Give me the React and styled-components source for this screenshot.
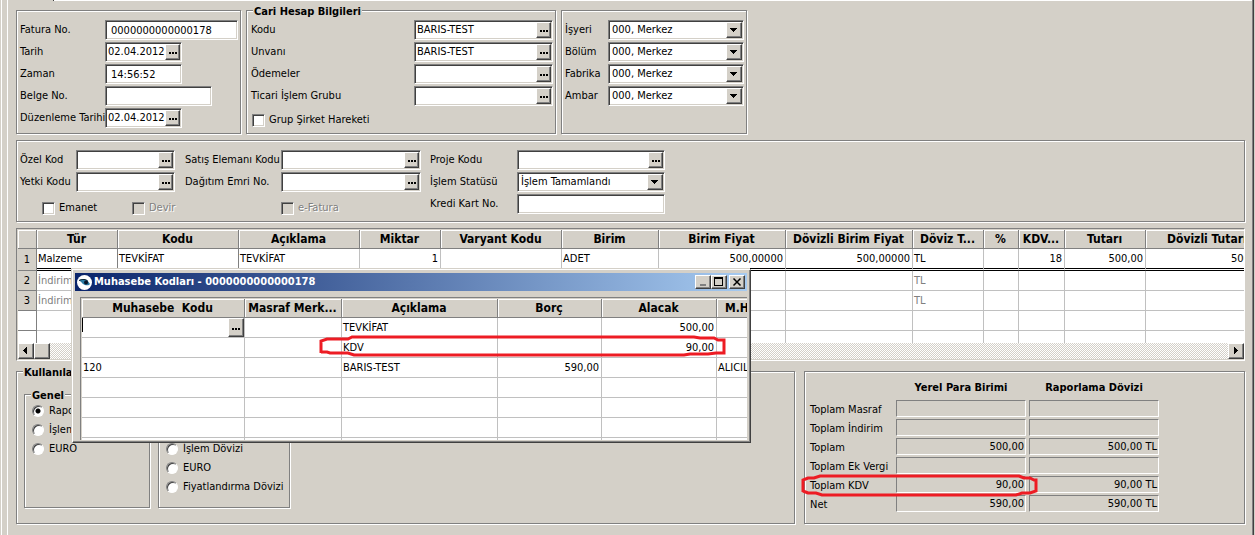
import styled, { createGlobalStyle, css } from "styled-components";

const face = "#d4d0c8";
const shadow = "#808080";
const dark = "#404040";
const line = "#c0c0c0";

const GlobalStyle = createGlobalStyle`
  *{
    box-sizing:border-box;
  }
  body{
    margin:0;
    background:${face};
  }
  body, input, select, button{
    font-family:"DejaVu Sans Condensed", "DejaVu Sans", sans-serif;
    font-size:11px;
    line-height:14px;
    color:#000;
  }
`;

/* frame */
const Shell = styled.div`
  min-height:100vh;
  margin:0 1px;
  padding-left:5px;
  border-left:1px solid #fff;
  border-right:1px solid ${dark};
  display:flex;
  overflow:hidden;
`;
const Page = styled.main`
  flex:1;
  min-width:0;
  border-left:1px solid #fff;
  border-right:1px solid ${shadow};
`;
const TabEdge = styled.div`
  height:1px;
  margin-left:45px;
  border-left:1px solid ${dark};
  background:#fff;
`;
const Body = styled.div`
  position:relative;
  display:flex;
  flex-direction:column;
  padding:9px 7px 0 8px;
`;
const GroupRow = styled.div`
  display:flex;
  gap:${({ $gap }) => $gap || 5}px;
  margin-bottom:6px;
`;
const Columns = styled.div`
  display:flex;
  gap:${({ $gap }) => $gap}px;
`;

const Group = styled.fieldset`
  position:relative;
  min-width:0;
  margin:0;
  padding:${({ $pad }) => $pad || "9px 3px 5px"};
  border:1px solid ${shadow};
  box-shadow:1px 1px 0 #fff, inset 1px 1px 0 #fff;
  ${({ $width }) => ($width ? `width:${$width}px;` : "flex:1;")}
`;
const Legend = styled.legend`
  position:absolute;
  top:-6px;
  left:6px;
  padding:0 1px;
  background:${face};
  font-weight:bold;
  white-space:nowrap;
`;
const Form = styled.div`
  display:grid;
  grid-template-columns:${({ $cols }) => $cols};
  grid-auto-rows:20px;
  row-gap:2px;
  align-items:center;
`;
const Label = styled.label`
  white-space:nowrap;
`;

/* controls */
const sunken = css`
  border:1px solid;
  border-color:${shadow} #fff #fff ${shadow};
  box-shadow:inset 1px 1px 0 ${dark}, inset -1px -1px 0 ${face};
`;
const raised = css`
  border:1px solid;
  border-color:#fff ${dark} ${dark} #fff;
  box-shadow:inset -1px -1px 0 ${shadow};
  background:${face};
`;
const TextInput = styled.input`
  ${sunken}
  width:${({ $width }) => $width}px;
  height:20px;
  padding:0 5px;
  background:#fff;
  outline:none;
`;
const FieldBox = styled.div`
  ${sunken}
  display:flex;
  width:${({ $width }) => $width}px;
  height:20px;
  padding:1px 1px 1px 2px;
  background:#fff;
  input, select{
    flex:1;
    min-width:0;
    width:0;
    padding:0;
    border:0;
    background:none;
    outline:none;
    appearance:none;
  }
  select{
    padding-left:1px;
  }
`;
const SmallButton = styled.button`
  ${raised}
  flex:none;
  display:flex;
  justify-content:center;
  align-items:center;
  width:${({ $width }) => $width || 15}px;
  height:16px;
  padding:0;
`;
const ArrowBox = styled.span`
  ${raised}
  flex:none;
  display:flex;
  justify-content:center;
  align-items:center;
  width:16px;
  height:16px;
`;
const CheckLabel = styled.label`
  display:flex;
  align-items:center;
  gap:4px;
  width:${({ $width }) => ($width ? `${$width}px` : "auto")};
  white-space:nowrap;
  ${({ $off }) => $off && `color:${shadow}; text-shadow:1px 1px 0 #fff;`}
  input{
    ${sunken}
    appearance:none;
    width:13px;
    height:13px;
    margin:0;
    background:${({ $off }) => ($off ? face : "#fff")};
  }
`;
const CheckRow = styled.div`
  display:flex;
  padding:${({ $pad }) => $pad};
`;
const RadioLabel = styled.label`
  display:flex;
  align-items:center;
  gap:5px;
  height:19px;
  white-space:nowrap;
  input{
    appearance:none;
    width:12px;
    height:12px;
    margin:0;
    flex:none;
    border:1px solid;
    border-color:${shadow} #fff #fff ${shadow};
    border-radius:50%;
    background:#fff;
    box-shadow:inset 1px 1px 0 ${dark};
  }
  input:checked{
    background:radial-gradient(circle, #000 0 2px, #fff 3px);
  }
`;

/* grids */
const GridFrame = styled.div`
  border:1px solid;
  border-color:${shadow} #fff #fff ${shadow};
  padding:1px 0 1px 1px;
  margin-bottom:10px;
`;
const GridClip = styled.div`
  height:${({ $height }) => $height}px;
  overflow:hidden;
  background:#fff;
`;
const Table = styled.table`
  width:100%;
  table-layout:fixed;
  border-collapse:separate;
  border-spacing:0;
`;
const HeadCell = styled.th`
  height:19px;
  padding:0 3px 1px 2px;
  border-right:1px solid ${shadow};
  border-bottom:1px solid ${shadow};
  box-shadow:inset 1px 1px 0 #fff;
  background:${face};
  font-size:12px;
  text-align:${({ $cut }) => ($cut ? "left" : "center")};
  ${({ $cut }) => $cut && `padding-left:${$cut}px; padding-right:0; border-right:0;`}
  overflow:hidden;
  white-space:pre;
`;
const Cell = styled.td`
  height:${({ $first }) => ($first ? 22 : 20)}px;
  padding:0 2px 0 1px;
  border-right:1px solid ${({ $strong }) => ($strong ? shadow : line)};
  border-bottom:${({ $first }) => ($first ? "3px double #000" : `1px solid ${line}`)};
  text-align:${({ $right }) => ($right ? "right" : "left")};
  color:${({ $off }) => ($off ? shadow : "#000")};
  overflow:hidden;
  white-space:nowrap;
  ${({ $cut }) => $cut && `padding-left:${$cut}px; text-align:left; border-right:0;`}
`;
const NumberCell = styled(Cell)`
  border-right-color:${shadow};
  border-bottom:1px solid ${shadow};
  padding:0;
  text-align:center;
  color:#000;
  background:${({ $blank }) => ($blank ? "#fff" : face)};
`;
const EditCell = styled.div`
  display:flex;
  height:19px;
  margin:0 -2px 0 -1px;
  input{
    flex:1;
    min-width:0;
    border:0;
    border-left:1px solid #000;
    height:14px;
    padding:0;
    outline:none;
  }
  button{
    height:19px;
  }
`;
const ScrollBar = styled.div`
  display:flex;
  height:16px;
  background:repeating-conic-gradient(#fff 0 25%, ${face} 0 50%) 0 0 / 2px 2px;
`;
const Thumb = styled.div`
  ${raised}
  width:16px;
  margin-right:auto;
`;

/* totals */
const TotalsTable = styled.table`
  border-spacing:0;
  thead th{
    height:22px;
    padding:0 3px 3px 0;
  }
  tbody td{
    height:19px;
    padding:0 3px 2px 0;
  }
`;
const RowName = styled.th`
  width:86px;
  padding:0;
  font-weight:normal;
  text-align:left;
  white-space:nowrap;
`;
const Total = styled.output`
  display:block;
  width:130px;
  height:17px;
  padding-right:1px;
  border:1px solid;
  border-color:${shadow} #fff #fff ${shadow};
  line-height:16px;
  text-align:right;
`;

/* accounting codes window */
const Window = styled.section`
  position:absolute;
  top:268px;
  left:64px;
  width:679px;
  padding:3px 3px 2px 2px;
  border:1px solid;
  border-color:#fff ${dark} ${dark} #fff;
  box-shadow:inset -1px -1px 0 ${shadow}, -1px -1px 0 ${face};
  background:${face};
`;
const TitleBar = styled.header`
  display:flex;
  align-items:center;
  height:18px;
  padding:0 2px;
  background:linear-gradient(to right, #0a246a, #a6caf0);
  color:#fff;
  h2{
    flex:1;
    margin:0 0 0 2px;
    font-size:11px;
  }
  button{
    height:14px;
  }
  button:last-child{
    margin-left:2px;
  }
`;
const WindowGrid = styled.div`
  margin:6px 0 0 5px;
  border-top:1px solid ${shadow};
  border-left:1px solid ${shadow};
  padding:1px 0 0 1px;
`;
const Ring = styled.svg`
  position:absolute;
  top:${({ $top }) => $top}px;
  left:${({ $left }) => $left}px;
  pointer-events:none;
  fill:none;
  stroke:#ed1c24;
  stroke-width:3;
`;

const Dots = () => (
  <svg width="8" height="8" viewBox="0 0 8 8" aria-hidden="true" shapeRendering="crispEdges">
    <path d="M0 4h2v2H0zM3 4h2v2H3zM6 4h2v2H6z" />
  </svg>
);

const Arrow = ({ d }) => (
  <svg width="8" height="8" viewBox="0 0 8 8" aria-hidden="true" shapeRendering="crispEdges">
    <path d={d} />
  </svg>
);

const BrowseField = ({ id, value = "", width, label }) => (
  <FieldBox $width={width}>
    <input id={id} defaultValue={value} />
    <SmallButton type="button" aria-label={label}><Dots /></SmallButton>
  </FieldBox>
);

const SelectField = ({ id, value, width }) => (
  <FieldBox $width={width}>
    <select id={id} defaultValue={value}>
      <option>{value}</option>
    </select>
    <ArrowBox aria-hidden="true"><Arrow d="M0 2h7v1H0zM1 3h5v1H1zM2 4h3v1H2zM3 5h1v1H3z" /></ArrowBox>
  </FieldBox>
);

const Check = ({ children, width, off }) => (
  <CheckLabel $width={width} $off={off}>
    <input type="checkbox" disabled={off} />
    {children}
  </CheckLabel>
);

const accountFields = [
  ["kodu", "Kodu", "BARIS-TEST"],
  ["unvani", "Unvanı", "BARIS-TEST"],
  ["odemeler", "Ödemeler", ""],
  ["ticari", "Ticari İşlem Grubu", ""],
];
const places = ["İşyeri", "Bölüm", "Fabrika", "Ambar"];

const columns = [
  { title: "", width: 19 },
  { title: "Tür", width: 81 },
  { title: "Kodu", width: 121 },
  { title: "Açıklama", width: 121 },
  { title: "Miktar", width: 81, right: true },
  { title: "Varyant Kodu", width: 121 },
  { title: "Birim", width: 97 },
  { title: "Birim Fiyat", width: 127, right: true },
  { title: "Dövizli Birim Fiyat", width: 127, right: true },
  { title: "Döviz T...", width: 71 },
  { title: "%", width: 35 },
  { title: "KDV...", width: 46, right: true },
  { title: "Tutarı", width: 81, right: true },
  { title: "Dövizli Tutarı", cutHead: 21, cut: 85 },
];
const rows = [
  ["1", "Malzeme", "TEVKİFAT", "TEVKİFAT", "1", "", "ADET", "500,00000", "500,00000", "TL", "", "18", "500,00", "500,00"],
  ["2", "İndirim", "", "", "", "", "", "", "", "TL", "", "", "", ""],
  ["3", "İndirim", "", "", "", "", "", "", "", "TL", "", "", "", ""],
  Array(14).fill(""),
  Array(14).fill(""),
];

const codeColumns = [
  { title: "Muhasebe  Kodu", width: 163 },
  { title: "Masraf Merk...", width: 97 },
  { title: "Açıklama", width: 156 },
  { title: "Borç", width: 104, right: true },
  { title: "Alacak", width: 115, right: true },
  { title: "M.Hesap", cutHead: 8, cut: 1 },
];
const codeRows = [
  ["", "", "TEVKİFAT", "", "500,00", ""],
  ["", "", "KDV", "", "90,00", ""],
  ["120", "", "BARIS-TEST", "590,00", "", "ALICILAR"],
  Array(6).fill(""),
  Array(6).fill(""),
  Array(6).fill(""),
  Array(6).fill(""),
];

const totals = [
  ["Toplam Masraf", "", ""],
  ["Toplam İndirim", "", ""],
  ["Toplam", "500,00", "500,00 TL"],
  ["Toplam Ek Vergi", "", ""],
  ["Toplam KDV", "90,00", "90,00 TL"],
  ["Net", "590,00", "590,00 TL"],
];

const GridHead = ({ cols }) => (
  <>
    <colgroup>
      {cols.map((col, i) => <col key={i} width={col.width} />)}
    </colgroup>
    <thead>
      <tr>
        {cols.map((col, i) => <HeadCell key={i} $cut={col.cutHead}>{col.title}</HeadCell>)}
      </tr>
    </thead>
  </>
);

const InvoiceLines = () => (
  <GridFrame>
    <GridClip $height={113}>
      <Table>
        <GridHead cols={columns} />
        <tbody>
          {rows.map((row, r) => (
            <tr key={r}>
              <NumberCell $blank={!row[0]}>{row[0]}</NumberCell>
              {row.slice(1).map((text, i) => (
                <Cell
                  key={i}
                  $first={r === 0}
                  $off={r > 0}
                  $strong={r === 0 && i < 2}
                  $right={columns[i + 1].right}
                  $cut={columns[i + 1].cut}
                >
                  {text}
                </Cell>
              ))}
            </tr>
          ))}
        </tbody>
      </Table>
    </GridClip>
    <ScrollBar>
      <SmallButton type="button" $width={16} aria-label="Sola kaydır"><Arrow d="M5 0v7H4V0zM4 1v5H3V1zM3 2v3H2V2zM2 3v1H1V3z" /></SmallButton>
      <Thumb />
      <SmallButton type="button" $width={16} aria-label="Sağa kaydır"><Arrow d="M2 0v7h1V0zM3 1v5h1V1zM4 2v3h1V2zM5 3v1h1V3z" /></SmallButton>
    </ScrollBar>
  </GridFrame>
);

const AccountCodes = () => (
  <Window>
    <TitleBar>
      <svg width="15" height="15" viewBox="0 0 15 15" aria-hidden="true">
        <circle cx="7.5" cy="7.5" r="7.5" fill="#fff" />
        <path d="M2 5.500C4 3.500 8 3.500 10.500 5.500L13 9C12 11 8 10.500 6 9 4.500 7.500 4 6.500 2 5.500z" fill="#2a7ba4" />
        <path d="M2 5.500C5 4 9 4 11 6.500" fill="none" stroke="#10202c" />
        <circle cx="9" cy="7.500" r="2" fill="#061428" />
      </svg>
      <h2>Muhasebe Kodları - 0000000000000178</h2>
      <SmallButton type="button" $width={16} aria-label="Küçült">
        <svg width="10" height="10" viewBox="0 0 10 10" shapeRendering="crispEdges"><path d="M2 7h6v2H2z" fill="#808080" /></svg>
      </SmallButton>
      <SmallButton type="button" $width={16} aria-label="Büyüt">
        <svg width="10" height="10" viewBox="0 0 10 10" shapeRendering="crispEdges"><path d="M0 0h9v9H0zM1 2v6h7V2z" fillRule="evenodd" /></svg>
      </SmallButton>
      <SmallButton type="button" $width={16} aria-label="Kapat">
        <svg width="10" height="10" viewBox="0 0 10 10"><path d="M1.500 1.500l7 7M8.500 1.500l-7 7" stroke="#000" strokeWidth="1.500" /></svg>
      </SmallButton>
    </TitleBar>
    <WindowGrid>
      <GridClip $height={141}>
        <Table>
          <GridHead cols={codeColumns} />
          <tbody>
            {codeRows.map((row, r) => (
              <tr key={r}>
                {row.map((text, i) => (
                  <Cell key={i} $right={codeColumns[i].right} $cut={codeColumns[i].cut}>
                    {r === 0 && i === 0 ? (
                      <EditCell>
                        <input aria-label="Muhasebe Kodu" />
                        <SmallButton type="button" $width={16} aria-label="Kod seç"><Dots /></SmallButton>
                      </EditCell>
                    ) : text}
                  </Cell>
                ))}
              </tr>
            ))}
          </tbody>
        </Table>
      </GridClip>
    </WindowGrid>
    <Ring $top={64} $left={245} width="410" height="24" aria-hidden="true">
      <path d="M3 19V7L9 5H30L34 3H376L382 4H396L400 6H406V19H398L390 20H372L366 21H36L30 19H12L9 18H3" />
    </Ring>
  </Window>
);

const App = () => (
  <>
    <GlobalStyle />
    <Shell>
      <Page>
        <TabEdge />
        <Body>
          <GroupRow>
            <Group $width={225}>
              <Form $cols="85px 1fr">
                <Label htmlFor="fatura">Fatura No.</Label>
                <TextInput id="fatura" $width={133} defaultValue="0000000000000178" />
                <Label htmlFor="tarih">Tarih</Label>
                <BrowseField id="tarih" width={77} value="02.04.2012" label="Tarih seç" />
                <Label htmlFor="zaman">Zaman</Label>
                <TextInput id="zaman" $width={77} defaultValue="14:56:52" />
                <Label htmlFor="belge">Belge No.</Label>
                <TextInput id="belge" $width={107} />
                <Label htmlFor="duzenleme">Düzenleme Tarihi</Label>
                <BrowseField id="duzenleme" width={77} value="02.04.2012" label="Düzenleme tarihi seç" />
              </Form>
            </Group>
            <Group $width={310} $pad="9px 3px 5px 4px">
              <Legend>Cari Hesap Bilgileri</Legend>
              <Form $cols="163px 1fr">
                {accountFields.map(([id, label, value]) => [
                  <Label key={id} htmlFor={id}>{label}</Label>,
                  <BrowseField key={`${id}-f`} id={id} width={139} value={value} label={`${label} seç`} />,
                ])}
              </Form>
              <CheckRow $pad="7px 0 0 1px"><Check>Grup Şirket Hareketi</Check></CheckRow>
            </Group>
            <Group $width={186}>
              <Form $cols="43px 1fr">
                {places.map((place) => [
                  <Label key={place} htmlFor={place}>{place}</Label>,
                  <SelectField key={`${place}-f`} id={place} width={136} value="000, Merkez" />,
                ])}
              </Form>
            </Group>
          </GroupRow>

          <GroupRow>
            <Group $pad="9px 3px 6px">
              <Columns $gap={9}>
                <div>
                  <Form $cols="56px 109px 96px 140px">
                    <Label htmlFor="ozel">Özel Kod</Label>
                    <BrowseField id="ozel" width={99} label="Özel kod seç" />
                    <Label htmlFor="satis">Satış Elemanı Kodu</Label>
                    <BrowseField id="satis" width={140} label="Satış elemanı seç" />
                    <Label htmlFor="yetki">Yetki Kodu</Label>
                    <BrowseField id="yetki" width={99} label="Yetki kodu seç" />
                    <Label htmlFor="dagitim">Dağıtım Emri No.</Label>
                    <BrowseField id="dagitim" width={140} label="Dağıtım emri seç" />
                  </Form>
                  <CheckRow $pad="9px 0 0 22px">
                    <Check width={90}>Emanet</Check>
                    <Check width={149} off>Devir</Check>
                    <Check off>e-Fatura</Check>
                  </CheckRow>
                </div>
                <Form $cols="87px 148px">
                  <Label htmlFor="proje">Proje Kodu</Label>
                  <BrowseField id="proje" width={148} label="Proje seç" />
                  <Label htmlFor="statu">İşlem Statüsü</Label>
                  <SelectField id="statu" width={148} value="İşlem Tamamlandı" />
                  <Label htmlFor="kart">Kredi Kart No.</Label>
                  <TextInput id="kart" $width={148} />
                </Form>
              </Columns>
            </Group>
          </GroupRow>

          <InvoiceLines />

          <GroupRow $gap={9}>
            <Group $pad="22px 7px 15px">
              <Legend>Kullanılacak Para Birimi</Legend>
              <Columns $gap={8}>
                <Group $width={126} $pad="6px 7px 49px">
                  <Legend>Genel</Legend>
                  <RadioLabel><input type="radio" name="genel" defaultChecked />Raporlama Dövizi</RadioLabel>
                  <RadioLabel><input type="radio" name="genel" />İşlem Dövizi</RadioLabel>
                  <RadioLabel><input type="radio" name="genel" />EURO</RadioLabel>
                </Group>
                <Group $width={132} $pad="44px 7px 11px">
                  <RadioLabel><input type="radio" name="satir" />İşlem Dövizi</RadioLabel>
                  <RadioLabel><input type="radio" name="satir" />EURO</RadioLabel>
                  <RadioLabel><input type="radio" name="satir" />Fiyatlandırma Dövizi</RadioLabel>
                </Group>
              </Columns>
            </Group>
            <Group $width={441} $pad="6px 5px">
              <TotalsTable>
                <thead>
                  <tr>
                    <td />
                    <th>Yerel Para Birimi</th>
                    <th>Raporlama Dövizi</th>
                  </tr>
                </thead>
                <tbody>
                  {totals.map(([name, local, report]) => (
                    <tr key={name}>
                      <RowName scope="row">{name}</RowName>
                      <td><Total>{local}</Total></td>
                      <td><Total>{report}</Total></td>
                    </tr>
                  ))}
                </tbody>
              </TotalsTable>
              <Ring $top={101} $left={-5} width="240" height="26" aria-hidden="true">
                <path d="M3 19V7L8 5H14L20 3H219L224 5H230L234 7H236V18L230 20H222L216 22H22L16 20H8L3 18" />
              </Ring>
            </Group>
          </GroupRow>

          <AccountCodes />
        </Body>
      </Page>
    </Shell>
  </>
);

export default App;
